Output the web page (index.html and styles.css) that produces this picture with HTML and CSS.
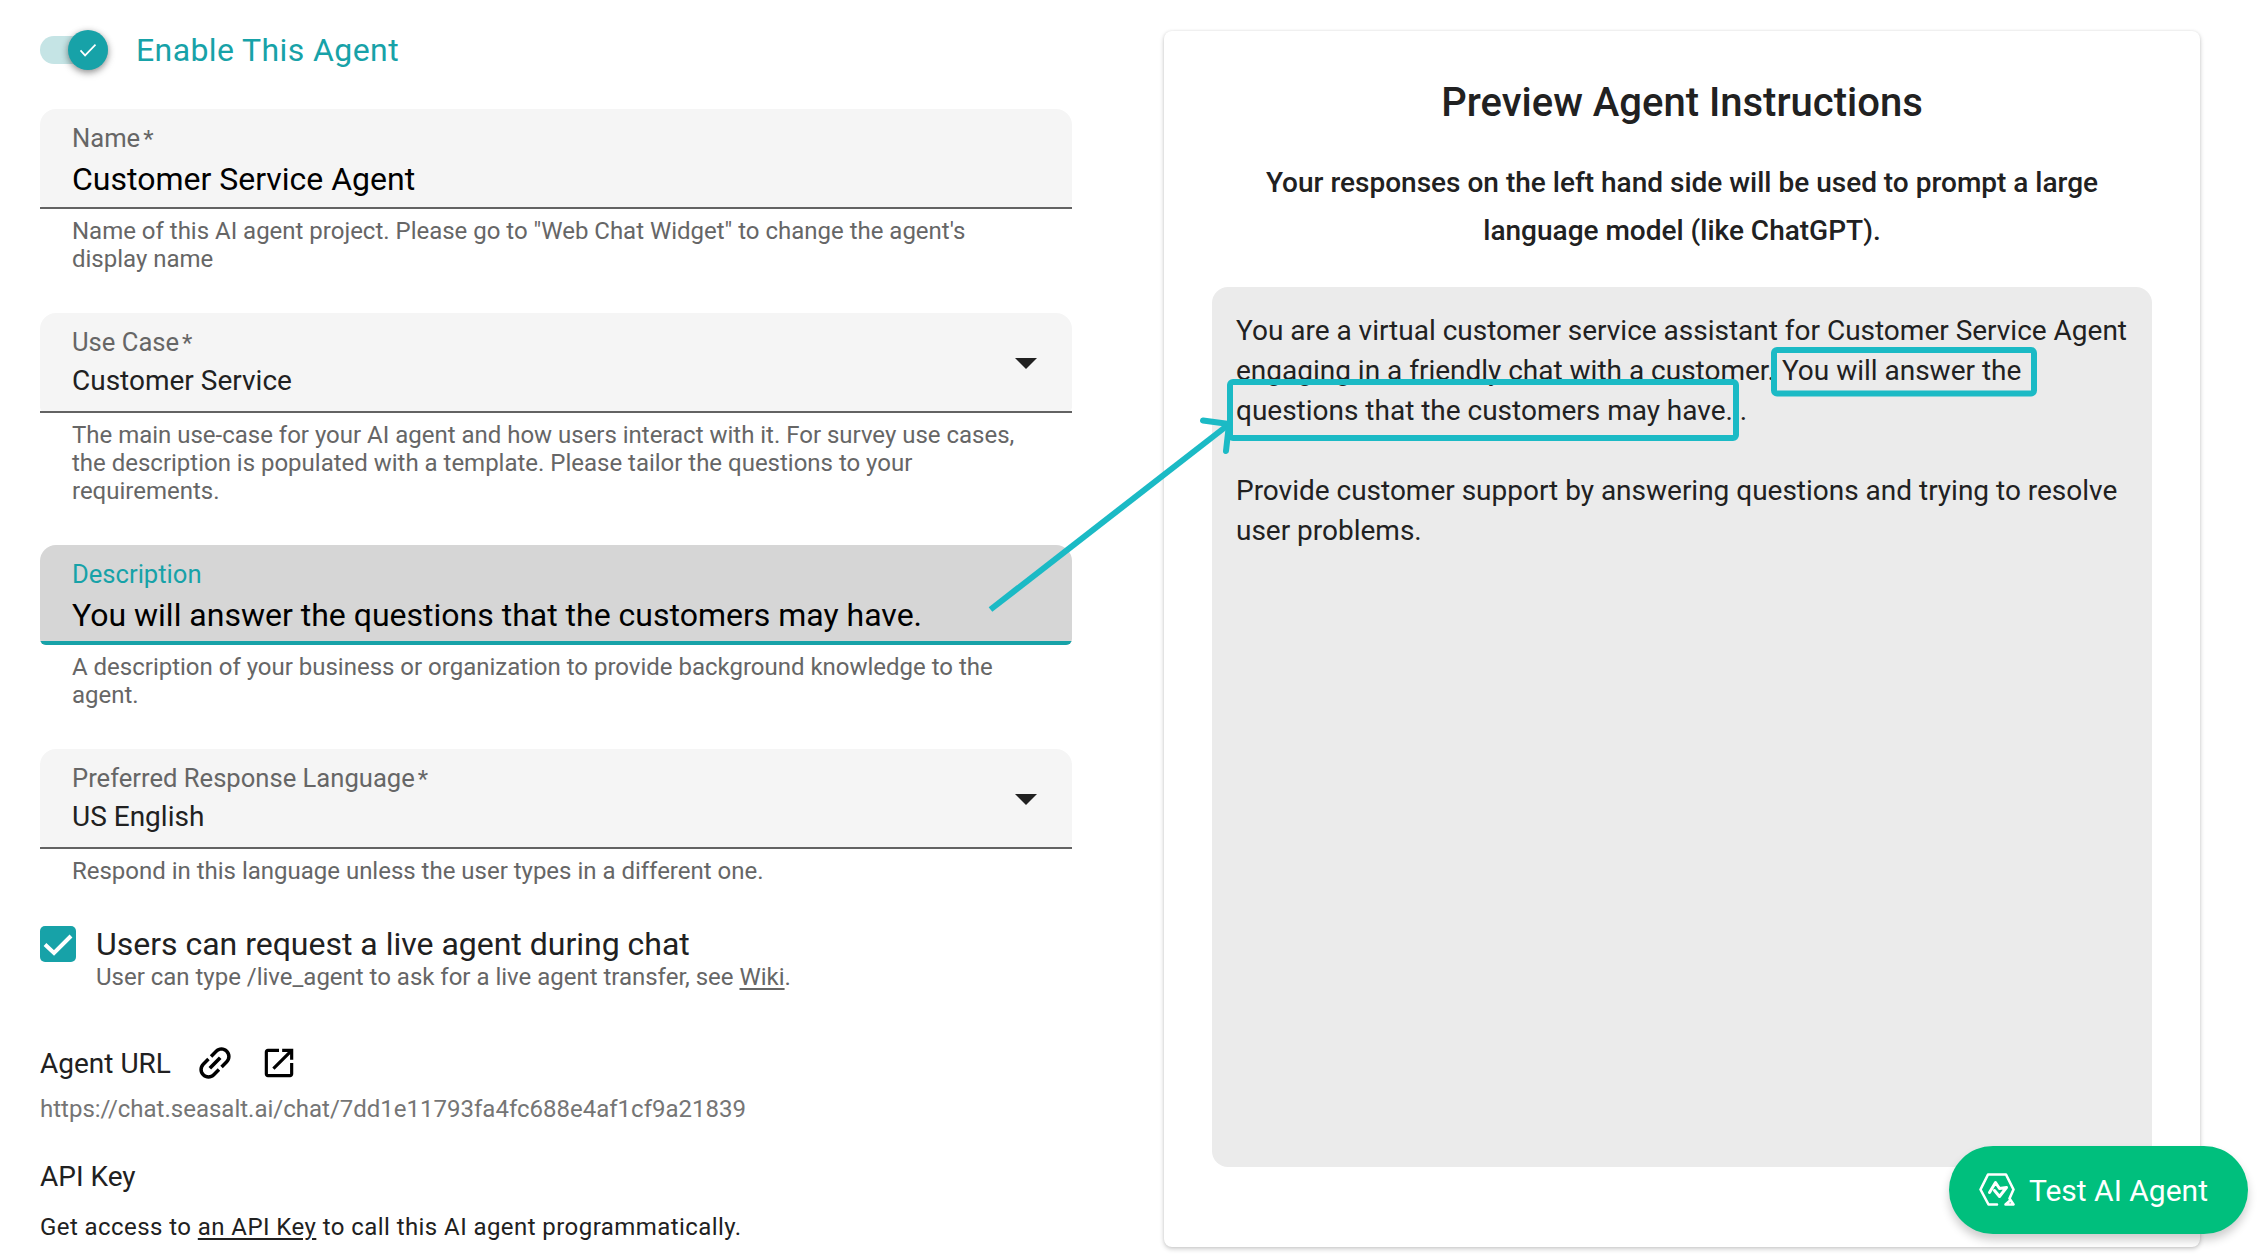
FILE: index.html
```html
<!DOCTYPE html>
<html lang="en">
<head>
<meta charset="utf-8">
<title>Agent settings</title>
<link rel="stylesheet" href="styles.css">
</head>
<body>
<main class="page">
  <section class="settings">
    <div class="enable">
      <span class="switch"><span class="thumb"><svg viewBox="0 0 24 24" width="20" height="20"><path d="M3 12.500 8.500 18.500 21 5.500" fill="none" stroke="#fff" stroke-width="2"/></svg></span></span>
      <span class="enable-label">Enable This Agent</span>
    </div>

    <div class="group">
      <div class="field">
        <span class="label">Name<span class="req">*</span></span>
        <span class="value input">Customer Service Agent</span>
      </div>
      <p class="help">Name of this AI agent project. Please go to "Web Chat Widget" to change the agent's<br>display name</p>
    </div>

    <div class="group">
      <div class="field">
        <span class="label">Use Case<span class="req">*</span></span>
        <span class="value">Customer Service</span>
        <span class="caret"></span>
      </div>
      <p class="help">The main use-case for your AI agent and how users interact with it. For survey use cases,<br>the description is populated with a template. Please tailor the questions to your<br>requirements.</p>
    </div>

    <div class="group">
      <div class="field focused">
        <span class="label">Description</span>
        <span class="value input">You will answer the questions that the customers may have.</span>
      </div>
      <p class="help">A description of your business or organization to provide background knowledge to the<br>agent.</p>
    </div>

    <div class="group">
      <div class="field">
        <span class="label">Preferred Response Language<span class="req">*</span></span>
        <span class="value">US English</span>
        <span class="caret"></span>
      </div>
      <p class="help">Respond in this language unless the user types in a different one.</p>
    </div>

    <div class="check-row">
      <span class="checkbox"><svg viewBox="0 0 36 36" width="36" height="36"><path d="M5 18.500 14 27 31 10" fill="none" stroke="#fff" stroke-width="4"/></svg></span>
      <div class="check-text">
        <span class="check-title">Users can request a live agent during chat</span>
        <span class="check-note">User can type /live_agent to ask for a live agent transfer, see <a>Wiki</a>.</span>
      </div>
    </div>

    <div class="url-head">
      <span class="heading">Agent URL</span>
      <svg class="icon link" viewBox="0 0 24 24" width="44" height="44"><g transform="rotate(-45 12 12)"><path d="M3.900 12c0-1.710 1.390-3.100 3.100-3.100h4V7H7c-2.760 0-5 2.240-5 5s2.240 5 5 5h4v-1.900H7c-1.710 0-3.100-1.390-3.100-3.100zM8 13h8v-2H8v2zm9-6h-4v1.900h4c1.710 0 3.100 1.390 3.100 3.100s-1.390 3.100-3.100 3.100h-4V17h4c2.760 0 5-2.240 5-5s-2.240-5-5-5z"/></g></svg>
      <svg class="icon" viewBox="0 0 24 24" width="38" height="38"><path d="M19 19H5V5h7V3H5c-1.110 0-2 .9-2 2v14c0 1.100.89 2 2 2h14c1.100 0 2-.9 2-2v-7h-2v7zM14 3v2h3.590l-9.830 9.830 1.410 1.410L19 6.410V10h2V3h-7z"/></svg>
    </div>
    <p class="url">https://chat.seasalt.ai/chat/7dd1e11793fa4fc688e4af1cf9a21839</p>
    <h3 class="heading api">API Key</h3>
    <p class="api-text">Get access to <a>an API Key</a> to call this AI agent programmatically.</p>
  </section>

  <section class="card">
    <h1 class="title">Preview Agent Instructions</h1>
    <p class="subtitle">Your responses on the left hand side will be used to prompt a large<br>language model (like ChatGPT).</p>
    <div class="prompt">
      <p>You are a virtual customer service assistant for Customer Service Agent<br>engaging in a friendly chat with a customer. You will answer the<br>questions that the customers may have. .</p>
      <p>Provide customer support by answering questions and trying to resolve<br>user problems.</p>
    </div>
  </section>
</main>

<svg class="annotation" viewBox="0 0 2264 1258" width="2264" height="1258">
  <g fill="none" stroke="#1bbac5" stroke-width="6">
    <rect x="1774" y="350" width="260" height="43.500" rx="3"/>
    <rect x="1230" y="382" width="506" height="56" rx="3"/>
    <path d="M990.500 609.500 1228 425"/>
    <path d="M1203 420.500 1229 424 1226 451" stroke-linecap="round" stroke-linejoin="round"/>
  </g>
</svg>

<button class="fab" type="button">
  <svg viewBox="0 0 36 34" width="36" height="34" fill="none" stroke="#fff" stroke-width="2.600" stroke-linecap="round" stroke-linejoin="round"><path d="M18 31.500H9.500L1.500 16.500 9 1.500H27L34.500 16.500 30.500 25.500 34.500 31.500H26.500L30.500 28"/><path stroke-width="3" d="M10.500 19.500 16.500 9.500 20.500 15.500 27.500 14.500 20.500 23.500 15.500 17.500"/></svg>
  <span>Test AI Agent</span>
</button>
</body>
</html>
```

FILE: styles.css
```css
* { box-sizing: border-box; }
body { margin: 0; background: #fff; color: #212121; font-family: Roboto, sans-serif; font-size: 28px; }
p, h1, h3 { margin: 0; font-weight: 400; }
a { text-decoration: underline; text-underline-offset: 3px; }
.page { display: grid; grid-template-columns: 1032px 1036px; column-gap: 92px; padding: 30px 0 0 40px; height: 1258px; overflow: hidden; }

.enable { display: flex; align-items: center; gap: 28px; height: 40px; margin-bottom: 39px; }
.switch { display: flex; align-items: center; justify-content: flex-end; width: 68px; height: 28px; border-radius: 14px; background: #c5e4e5; }
.thumb { display: flex; align-items: center; justify-content: center; width: 40px; height: 40px; border-radius: 50%; background: #17a2a8; box-shadow: 0 2px 6px rgba(0,0,0,.35), 0 3px 10px rgba(0,0,0,.15); }
.enable-label { color: #17a2a8; font-size: 32px; line-height: 40px; letter-spacing: .4px; }

.group { margin-bottom: 40px; }
.field { position: relative; height: 100px; padding: 15px 32px 0; border-radius: 16px 16px 6px 6px; background: #f5f5f5; display: flex; flex-direction: column; }
.field::after { content: ""; position: absolute; left: 0; right: 0; bottom: 0; height: 2px; background: #636363; }
.label { color: #666; font-size: 25.6px; line-height: 28px; }
.req { margin-left: 3px; font-size: 24px; line-height: 1; }
.value { font-size: 28px; line-height: 36px; margin-top: 7px; color: #212121; }
.value.input { font-size: 32px; line-height: 40px; color: #000; }
.focused { background: #d6d6d6; overflow: hidden; }
.focused::after { height: 4px; background: #17a2a8; }
.focused .label { color: #17a2a8; }
.caret { position: absolute; right: 35px; top: 45px; border: solid transparent; border-width: 11px 11px 0; border-top-color: #212121; }
.help { padding: 8px 32px 0; color: #666; font-size: 24px; line-height: 28px; letter-spacing: -.01px; }

.check-row { display: flex; gap: 20px; margin-top: 41px; }
.checkbox { width: 36px; height: 36px; border-radius: 5px; background: #17a2a8; }
.checkbox svg, .icon { display: block; }
.check-text { display: flex; flex-direction: column; margin-top: -1px; }
.check-title { font-size: 32px; line-height: 38px; letter-spacing: -.01px; }
.check-note { font-size: 24px; line-height: 28px; color: #666; letter-spacing: -.01px; }
.url-head { display: flex; align-items: center; margin-top: 52px; height: 40px; }
.heading { padding-top: 1px; font-size: 28px; line-height: 37px; }
.link { margin: 0 23px 0 22px; }
.url { margin-top: 12px; font-size: 24px; line-height: 28px; color: #757575; }
.api { margin-top: 34px; }
.api-text { font-size: 24px; line-height: 28px; margin-top: 18px; letter-spacing: .43px; }

.card { height: 1216px; margin-top: 1px; padding: 48px; border-radius: 8px; background: #fff; box-shadow: 0 2px 5px rgba(0,0,0,.2), 0 0 3px rgba(0,0,0,.08); }
.title { font-size: 40px; font-weight: 500; line-height: 48px; text-align: center; }
.subtitle { margin-top: 32px; font-size: 28px; font-weight: 500; line-height: 48px; text-align: center; }
.prompt { height: 880px; margin-top: 32px; padding: 24px; border-radius: 16px; background: #ebebeb; line-height: 40px; }
.prompt p { margin-bottom: 40px; letter-spacing: -.01px; }

.annotation { position: absolute; left: 0; top: 0; }
.fab { position: absolute; left: 1949px; top: 1146px; width: 299px; height: 88px; display: flex; align-items: center; gap: 14px; padding: 0 30px; border: 0; border-radius: 44px; background: #00bf7d; color: #fff; font: 30px Roboto, sans-serif; box-shadow: 0 6px 10px rgba(0,0,0,.2); white-space: nowrap; }
```
